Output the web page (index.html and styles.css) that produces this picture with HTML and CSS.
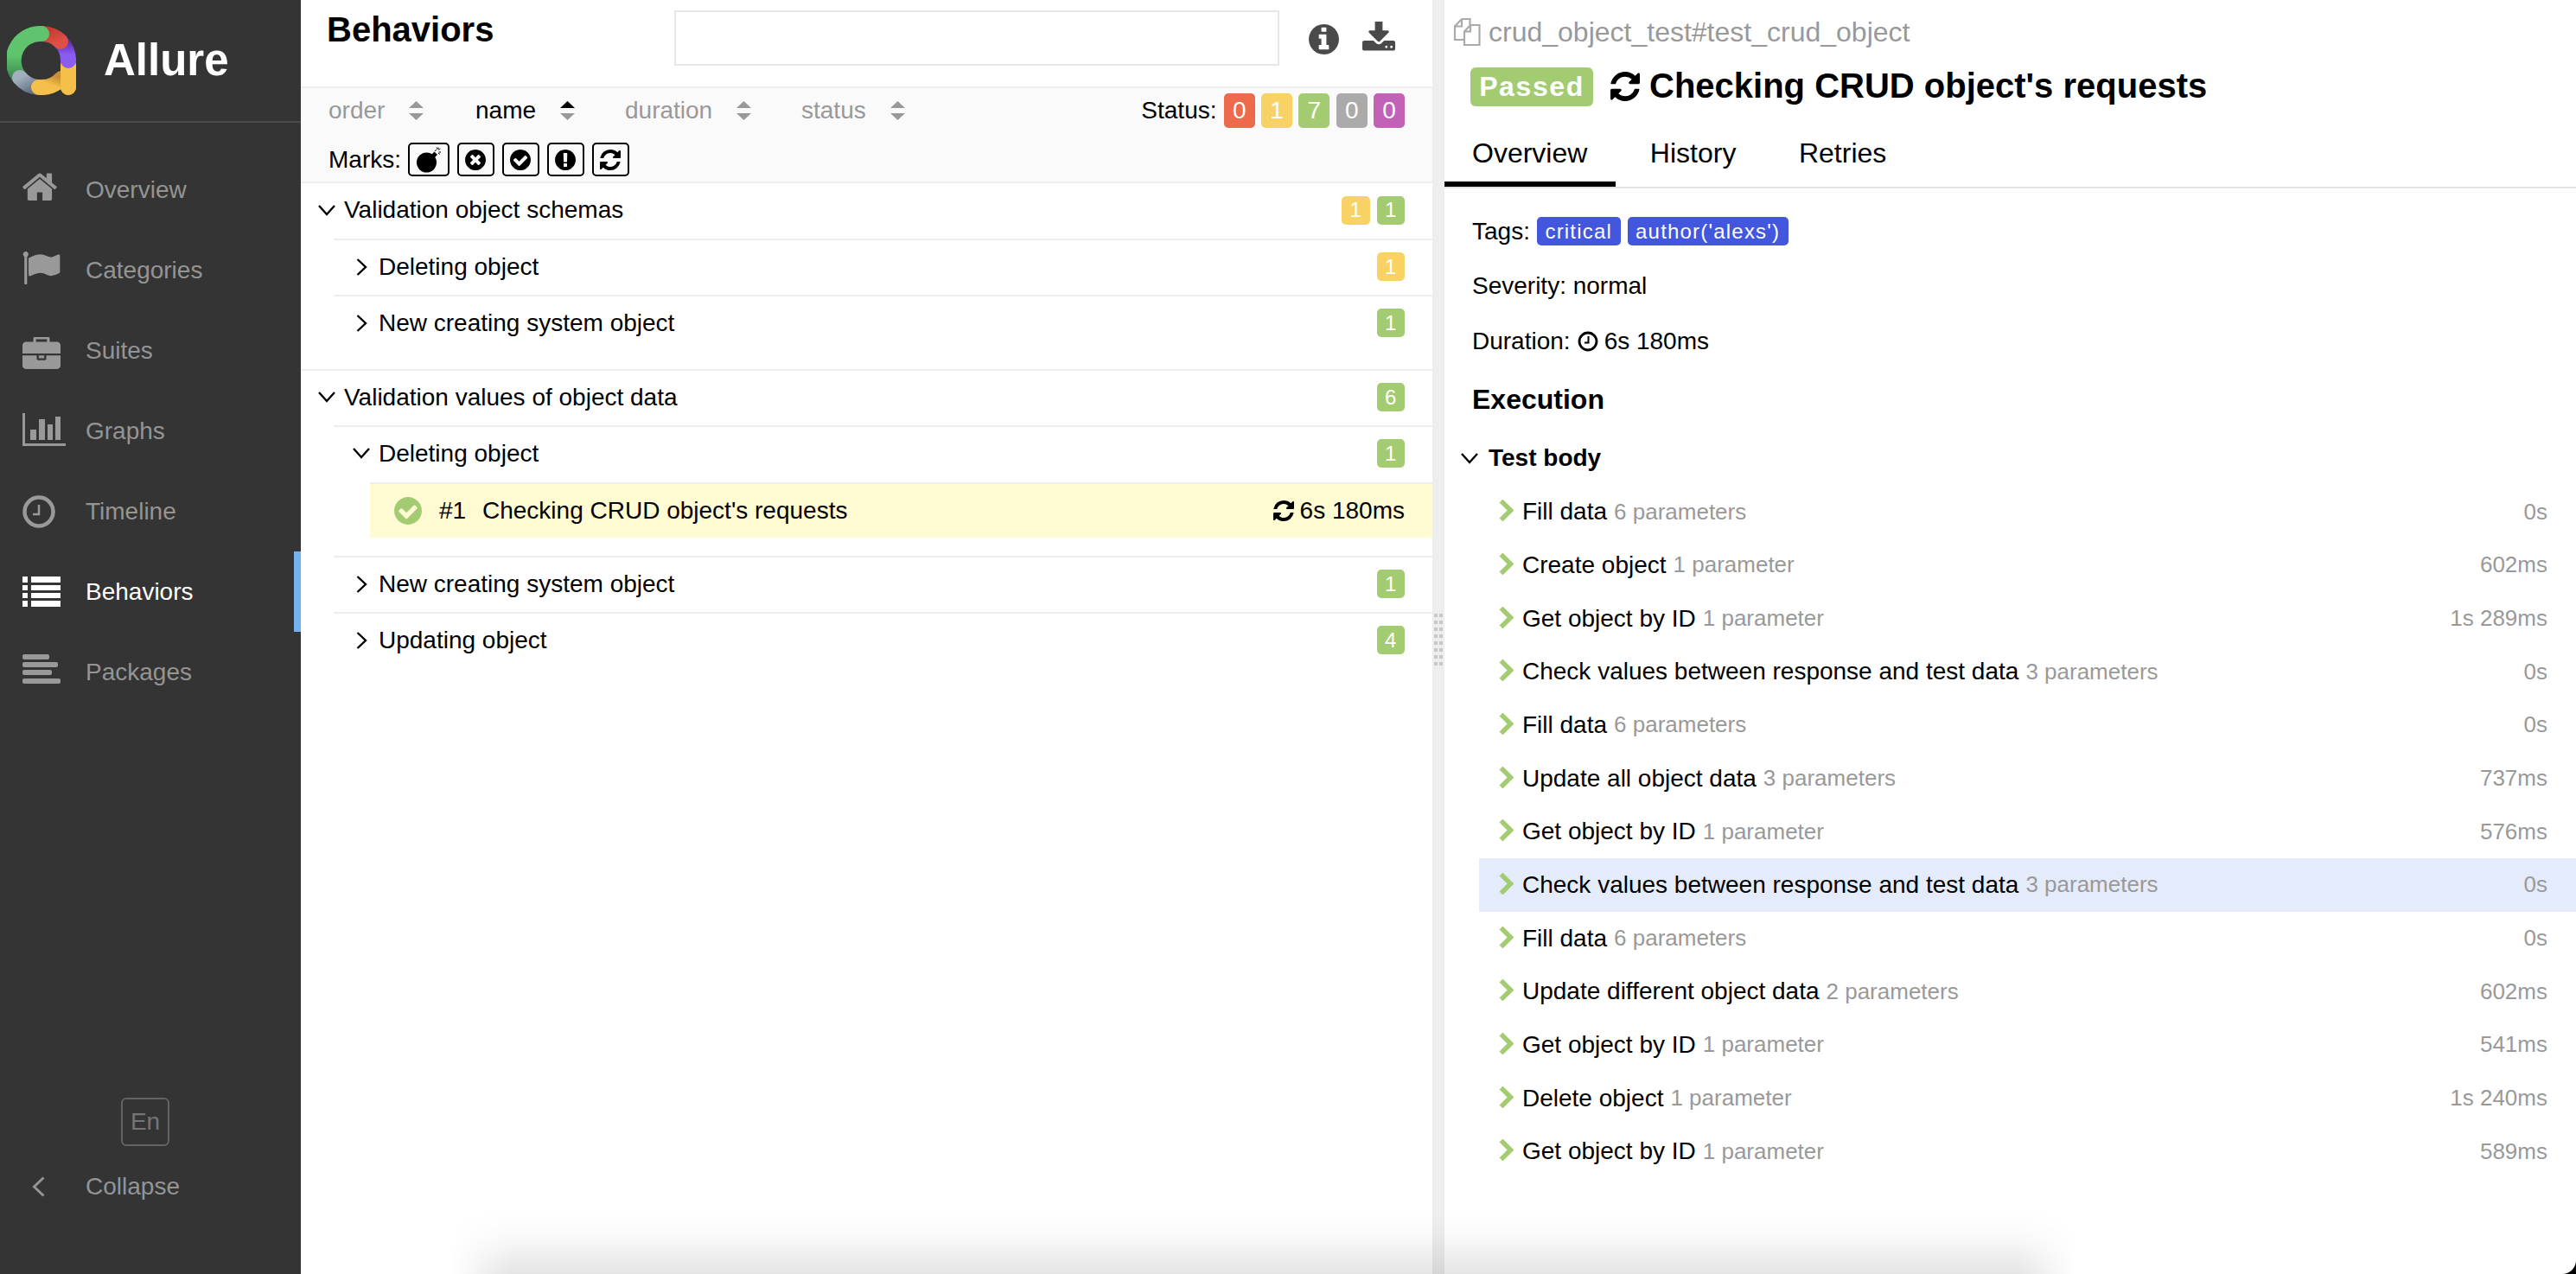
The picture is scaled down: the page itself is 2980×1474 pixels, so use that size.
FILE: index.html
```html
<!DOCTYPE html>
<html lang="en">
<head>
  <meta charset="UTF-8">
  <title>Allure Report</title>
  <link rel="stylesheet" href="styles.css">
</head>
<body>
  <svg class="sprite" xmlns="http://www.w3.org/2000/svg">
    <symbol id="i-home" viewBox="97 190 1600 1346"><path d="M1472 992v480q0 26-19 45t-45 19h-384v-384h-256v384h-384q-26 0-45-19t-19-45v-480q0-1 .5-3t.5-3l575-474 575 474q1 2 1 6zm223-69l-62 74q-8 9-21 11h-3q-13 0-21-7l-692-577-692 577q-12 8-24 7-13-2-21-11l-62-74q-8-10-7-23.5t11-21.5l719-599q32-26 76-26t76 26l244 204v-195q0-14 9-23t23-9h192q14 0 23 9t9 23v408l219 182q10 8 11 21.5t-7 23.5z"/></symbol>
    <symbol id="i-flag" viewBox="64 128 1728 1536"><path d="M320 256q0 72-64 110v1266q0 13-9.5 22.5t-22.5 9.5h-64q-13 0-22.5-9.5t-9.5-22.5v-1266q-64-38-64-110 0-53 37.5-90.5t90.5-37.5 90.5 37.5 37.5 90.5zm1472 64v763q0 25-12.5 38.5t-39.5 27.5q-215 116-369 116-61 0-123.5-22t-108.5-48-115.5-48-142.5-22q-192 0-464 146-17 9-33 9-26 0-45-19t-19-45v-742q0-32 31-55 21-14 79-43 236-120 421-120 107 0 200 29t219 88q38 19 88 19 54 0 117.5-21t110-47 88-47 54.5-21q26 0 45 19t19 45z"/></symbol>
    <symbol id="i-briefcase" viewBox="0 32 1792 1504"><path d="M640 256h512v-128h-512v128zm1152 640v480q0 66-47 113t-113 47h-1472q-66 0-113-47t-47-113v-480h672v160q0 26 19 45t45 19h320q26 0 45-19t19-45v-160h672zm-768 0v128h-256v-128h256zm768-480v384h-1792v-384q0-66 47-113t113-47h352v-160q0-40 28-68t68-28h576q40 0 68 28t28 68v160h352q66 0 113 47t47 113z"/></symbol>
    <symbol id="i-check" viewBox="128 128 1536 1536"><path d="M1412 734q0-28-18-46l-91-90q-19-19-45-19t-45 19l-408 407-226-226q-19-19-45-19t-45 19l-91 90q-18 18-18 46 0 27 18 45l362 362q19 19 45 19 27 0 46-19l543-543q18-18 18-45zm252 162q0 209-103 385.5t-279.5 279.5-385.5 103-385.5-103-279.5-279.5-103-385.5 103-385.5 279.5-279.5 385.5-103 385.5 103 279.5 279.5 103 385.5z"/></symbol>
    <symbol id="i-times" viewBox="128 128 1536 1536"><path d="M1277 1122q0-26-19-45l-181-181 181-181q19-19 19-45 0-27-19-46l-90-90q-19-19-46-19-26 0-45 19l-181 181-181-181q-19-19-45-19-27 0-46 19l-90 90q-19 19-19 46 0 26 19 45l181 181-181 181q-19 19-19 45 0 27 19 46l90 90q19 19 46 19 26 0 45-19l181-181 181 181q19 19 45 19 27 0 46-19l90-90q19-19 19-46zm387-226q0 209-103 385.5t-279.5 279.5-385.5 103-385.5-103-279.5-279.5-103-385.5 103-385.5 279.5-279.5 385.5-103 385.5 103 279.5 279.5 103 385.5z"/></symbol>
    <symbol id="i-excl" viewBox="128 128 1536 1536"><path d="M896 128q209 0 385.5 103t279.5 279.5 103 385.5-103 385.5-279.5 279.5-385.5 103-385.5-103-279.5-279.5-103-385.5 103-385.5 279.5-279.5 385.5-103zm128 1247v-190q0-14-9-23.5t-22-9.5h-192q-13 0-23 10t-10 23v190q0 13 10 23t23 10h192q13 0 22-9.5t9-23.5zm-2-344l18-621q0-12-10-18-10-8-24-8h-220q-14 0-24 8-10 6-10 18l17 621q0 10 10 17.5t24 7.5h185q14 0 23.5-7.5t10.5-17.5z"/></symbol>
    <symbol id="i-info" viewBox="128 128 1536 1536"><path d="M1152 1376v-160q0-14-9-23t-23-9h-96v-512q0-14-9-23t-23-9h-320q-14 0-23 9t-9 23v160q0 14 9 23t23 9h96v320h-96q-14 0-23 9t-9 23v160q0 14 9 23t23 9h448q14 0 23-9t9-23zm-128-896v-160q0-14-9-23t-23-9h-192q-14 0-23 9t-9 23v160q0 14 9 23t23 9h192q14 0 23-9t9-23zm640 416q0 209-103 385.5t-279.5 279.5-385.5 103-385.5-103-279.5-279.5-103-385.5 103-385.5 279.5-279.5 385.5-103 385.5 103 279.5 279.5 103 385.5z"/></symbol>
    <symbol id="i-download" viewBox="64 128 1664 1408"><path d="M1344 1344q0-26-19-45t-45-19-45 19-19 45 19 45 45 19 45-19 19-45zm256 0q0-26-19-45t-45-19-45 19-19 45 19 45 45 19 45-19 19-45zm128-224v320q0 40-28 68t-68 28h-1472q-40 0-68-28t-28-68v-320q0-40 28-68t68-28h465l135 136q58 56 136 56t136-56l136-136h464q40 0 68 28t28 68zm-325-569q17 41-14 70l-448 448q-18 19-45 19t-45-19l-448-448q-31-29-14-70 17-39 59-39h256v-448q0-26 19-45t45-19h256q26 0 45 19t19 45v448h256q42 0 59 39z"/></symbol>
    <symbol id="i-sync" viewBox="0 0 1536 1536"><path d="M1511 928q0 5-1 7-64 268-268 434.5t-478 166.5q-146 0-282.5-55t-243.5-157l-129 129q-19 19-45 19t-45-19-19-45v-448q0-26 19-45t45-19h448q26 0 45 19t19 45-19 45l-137 137q71 66 161 102t187 36q134 0 250-65t186-179q11-17 53-117 8-23 30-23h192q13 0 22.5 9.5t9.5 22.5zm25-800v448q0 26-19 45t-45 19h-448q-26 0-45-19t-19-45 19-45l138-138q-148-137-349-137-134 0-250 65t-186 179q-11 17-53 117-8 23-30 23h-199q-13 0-22.5-9.5t-9.5-22.5v-7q65-268 270-434.5t480-166.5q146 0 284 55.5t245 156.5l130-129q19-19 45-19t45 19 19 45z"/></symbol>
    <symbol id="i-bomb" viewBox="0 0 32 32">
      <circle cx="13.5" cy="19" r="11.5"/>
      <path d="M19 10l3.5-3.5 3.5 3.5-3.5 3.5z"/>
      <path d="M23 6l2-2M27 1.5v2.5M25 1.5l1 2M29.5 3l-2 1.5M30 7h-2.500M29 9.5l-2-1.5" fill="none" stroke="currentColor" stroke-width="1"/>
    </symbol>
    <symbol id="i-clock" viewBox="0 0 24 24">
      <circle cx="12" cy="12" r="10" fill="none" stroke="currentColor" stroke-width="2.8"/>
      <path d="M12.5 6v7.5H8" fill="none" stroke="currentColor" stroke-width="2"/>
    </symbol>
    <symbol id="i-sort" viewBox="0 0 17 22">
      <path class="sort-up" d="M8.5 0L17 8H0z"/>
      <path class="sort-down" d="M0 14h17L8.5 22z"/>
    </symbol>
    <symbol id="i-down" viewBox="0 0 20 13"><path d="M1 1l9 10 9-10" fill="none" stroke="currentColor" stroke-width="2.4"/></symbol>
    <symbol id="i-right" viewBox="0 0 13 20"><path d="M1.5 1l9.500 9-9.500 9" fill="none" stroke="currentColor" stroke-width="2.4"/></symbol>
    <symbol id="i-step" viewBox="0 0 17 25"><path d="M2.5 1.5l11 11-11 11" fill="none" stroke="currentColor" stroke-width="5.5"/></symbol>
  </svg>

  <aside class="side-nav">
    <div class="side-nav__head">
      <svg class="logo" viewBox="0 0 80 80" xmlns="http://www.w3.org/2000/svg">
        <defs>
          <linearGradient id="g-green" x1="0" y1="0" x2="0" y2="1"><stop offset="0.5" stop-color="#5fc46d"/><stop offset="1" stop-color="#3c8a4c"/></linearGradient>
          <linearGradient id="g-red" x1="0" y1="0" x2="1" y2="1"><stop offset="0" stop-color="#c43d33"/><stop offset="1" stop-color="#de5046"/></linearGradient>
          <linearGradient id="g-purple" x1="0" y1="0" x2="0" y2="1"><stop offset="0" stop-color="#5f2db8"/><stop offset="0.7" stop-color="#8a5cf0"/></linearGradient>
          <linearGradient id="g-grey" x1="0" y1="0" x2="1" y2="1"><stop offset="0" stop-color="#a2afbd"/><stop offset="1" stop-color="#667385"/></linearGradient>
          <linearGradient id="g-yellow" x1="0" y1="1" x2="1" y2="0"><stop offset="0.4" stop-color="#f5c04a"/><stop offset="1" stop-color="#c98f35"/></linearGradient>
        </defs>
        <g fill="none" stroke-width="18" stroke-linecap="round">
          <path d="M71 45v26" stroke="#f5c04a"/>
          <path d="M62 18A31 31 0 0 1 71 40" stroke="url(#g-purple)"/>
          <path d="M40 9A31 31 0 0 1 62 18" stroke="url(#g-red)"/>
          <path d="M15 60A31 31 0 0 1 40 9" stroke="url(#g-green)"/>
          <path d="M36 71A31 31 0 0 1 15 60" stroke="url(#g-grey)"/>
          <path d="M37 70.9A31 31 0 0 0 63 61" stroke="url(#g-yellow)"/>
        </g>
        <path d="M62 45h18v26a9 9 0 0 1-18 0z" fill="#f5c04a"/>
        <path d="M62 40a9 9 0 0 0 18 0v-4H62z" fill="#8a5cf0"/>
      </svg>
      <span class="brand">Allure</span>
    </div>

    <nav class="side-nav__menu">
      <a class="nav-item"><span class="nav-icon"><svg class="ico-home"><use href="#i-home"/></svg></span>Overview</a>
      <a class="nav-item"><span class="nav-icon"><svg class="ico-flag"><use href="#i-flag"/></svg></span>Categories</a>
      <a class="nav-item"><span class="nav-icon"><svg class="ico-case"><use href="#i-briefcase"/></svg></span>Suites</a>
      <a class="nav-item"><span class="nav-icon">
        <svg class="ico-chart" viewBox="0 0 50 38">
          <path d="M0 0h3v35h47v3H0z"/>
          <path d="M9 19h7v12H9zM19 7h7v24h-7zM29 13h6v18h-6zM38 4h6v27h-6z"/>
        </svg></span>Graphs</a>
      <a class="nav-item"><span class="nav-icon">
        <svg class="ico-clock" viewBox="0 0 38 38">
          <circle cx="19" cy="19" r="16.5" fill="none" stroke="currentColor" stroke-width="4.5"/>
          <path d="M19 11v11h-7" fill="none" stroke="currentColor" stroke-width="2.5"/>
        </svg></span>Timeline</a>
      <a class="nav-item nav-item--active"><span class="nav-icon">
        <svg class="ico-list" viewBox="0 0 44 35">
          <path d="M0 0h6v7H0zM10 0h34v7H10zM0 10h6v6H0zM10 10h34v6H10zM0 19h6v6H0zM10 19h34v6H10zM0 28h6v7H0zM10 28h34v7H10z"/>
        </svg></span>Behaviors</a>
      <a class="nav-item"><span class="nav-icon">
        <svg class="ico-pack" viewBox="0 0 44 35">
          <rect width="31" height="6" rx="2"/><rect y="9" width="41" height="6" rx="2"/><rect y="18" width="34" height="6" rx="2"/><rect y="28" width="44" height="6" rx="2"/>
        </svg></span>Packages</a>
    </nav>

    <div class="side-nav__foot">
      <div class="lang">En</div>
      <a class="collapse">
        <svg class="collapse__arrow" viewBox="0 0 15 24"><path d="M13.5 1.5L2.5 12l11 10.5" fill="none" stroke="currentColor" stroke-width="3"/></svg>
        Collapse
      </a>
    </div>
  </aside>

  <section class="pane pane--tree">
    <header class="tree-head">
      <h2 class="tree-head__title">Behaviors</h2>
      <input class="search" type="text">
      <svg class="tool tool--info"><use href="#i-info"/></svg>
      <svg class="tool tool--download"><use href="#i-download"/></svg>
    </header>

    <div class="filters">
      <div class="filters__row">
        <span class="sorter sorter--order">order <svg class="sort-ico"><use href="#i-sort"/></svg></span>
        <span class="sorter sorter--name sorter--active">name <svg class="sort-ico"><use href="#i-sort"/></svg></span>
        <span class="sorter sorter--duration">duration <svg class="sort-ico"><use href="#i-sort"/></svg></span>
        <span class="sorter sorter--status">status <svg class="sort-ico"><use href="#i-sort"/></svg></span>
        <span class="status-filter">
          <span class="status-filter__label">Status:</span>
          <span class="count count--big failed">0</span>
          <span class="count count--big broken">1</span>
          <span class="count count--big passed">7</span>
          <span class="count count--big skipped">0</span>
          <span class="count count--big unknown">0</span>
        </span>
      </div>
      <div class="marks">
        <span class="marks__label">Marks:</span>
        <span class="mark mark--wide"><svg><use href="#i-bomb"/></svg></span>
        <span class="mark"><svg><use href="#i-times"/></svg></span>
        <span class="mark"><svg><use href="#i-check"/></svg></span>
        <span class="mark"><svg><use href="#i-excl"/></svg></span>
        <span class="mark"><svg><use href="#i-sync"/></svg></span>
      </div>
    </div>

    <div class="tree">
      <div class="group">
        <div class="group__head">
          <svg class="arrow-down"><use href="#i-down"/></svg>
          <span class="node-name">Validation object schemas</span>
          <span class="counts"><span class="count broken">1</span><span class="count passed">1</span></span>
        </div>
        <div class="node">
          <svg class="arrow-right"><use href="#i-right"/></svg>
          <span class="node-name">Deleting object</span>
          <span class="counts"><span class="count broken">1</span></span>
        </div>
        <div class="node">
          <svg class="arrow-right"><use href="#i-right"/></svg>
          <span class="node-name">New creating system object</span>
          <span class="counts"><span class="count passed">1</span></span>
        </div>
      </div>

      <div class="group">
        <div class="group__head">
          <svg class="arrow-down"><use href="#i-down"/></svg>
          <span class="node-name">Validation values of object data</span>
          <span class="counts"><span class="count passed">6</span></span>
        </div>
        <div class="node">
          <svg class="arrow-down arrow-down--node"><use href="#i-down"/></svg>
          <span class="node-name">Deleting object</span>
          <span class="counts"><span class="count passed">1</span></span>
        </div>
        <div class="leaf-wrap">
          <div class="leaf">
            <svg class="leaf__status"><use href="#i-check"/></svg>
            <span class="leaf__order">#1</span>
            <span class="node-name">Checking CRUD object's requests</span>
            <span class="leaf__time"><svg class="leaf__sync"><use href="#i-sync"/></svg>6s 180ms</span>
          </div>
        </div>
        <div class="node">
          <svg class="arrow-right"><use href="#i-right"/></svg>
          <span class="node-name">New creating system object</span>
          <span class="counts"><span class="count passed">1</span></span>
        </div>
        <div class="node">
          <svg class="arrow-right"><use href="#i-right"/></svg>
          <span class="node-name">Updating object</span>
          <span class="counts"><span class="count passed">4</span></span>
        </div>
      </div>
    </div>
  </section>

  <div class="splitter"><div class="splitter__grip"></div></div>

  <section class="pane pane--detail">
    <div class="full-name">
      <svg class="full-name__copy" viewBox="0 0 32 32">
        <path d="M10 1L2 9.5V25h10M10 1h9.5v7M10 1v8.5H2" fill="none" stroke="currentColor" stroke-width="2.2"/>
        <path d="M20 8h10.5v23H13V15.5zM20 8v7.5h-7" fill="none" stroke="currentColor" stroke-width="2.2"/>
      </svg>
      crud_object_test#test_crud_object
    </div>
    <h1 class="test-title">
      <span class="status-pill">Passed</span>
      <svg class="test-title__sync"><use href="#i-sync"/></svg>
      Checking CRUD object's requests
    </h1>
    <div class="tabs">
      <a class="tab tab--active">Overview</a>
      <a class="tab">History</a>
      <a class="tab">Retries</a>
    </div>

    <div class="meta">
      <div class="meta__row">Tags:<span class="tag tag--first">critical</span><span class="tag">author('alexs')</span></div>
      <div class="meta__row">Severity: normal</div>
      <div class="meta__row">Duration:<svg class="meta__clock"><use href="#i-clock"/></svg>6s 180ms</div>
    </div>

    <h3 class="section-title">Execution</h3>
    <div class="stage"><svg class="arrow-down"><use href="#i-down"/></svg>Test body</div>

    <div class="steps">
      <div class="step"><svg class="step__arrow"><use href="#i-step"/></svg><span class="step__name">Fill data</span><span class="step__params">6 parameters</span><span class="step__time">0s</span></div>
      <div class="step"><svg class="step__arrow"><use href="#i-step"/></svg><span class="step__name">Create object</span><span class="step__params">1 parameter</span><span class="step__time">602ms</span></div>
      <div class="step"><svg class="step__arrow"><use href="#i-step"/></svg><span class="step__name">Get object by ID</span><span class="step__params">1 parameter</span><span class="step__time">1s 289ms</span></div>
      <div class="step"><svg class="step__arrow"><use href="#i-step"/></svg><span class="step__name">Check values between response and test data</span><span class="step__params">3 parameters</span><span class="step__time">0s</span></div>
      <div class="step"><svg class="step__arrow"><use href="#i-step"/></svg><span class="step__name">Fill data</span><span class="step__params">6 parameters</span><span class="step__time">0s</span></div>
      <div class="step"><svg class="step__arrow"><use href="#i-step"/></svg><span class="step__name">Update all object data</span><span class="step__params">3 parameters</span><span class="step__time">737ms</span></div>
      <div class="step"><svg class="step__arrow"><use href="#i-step"/></svg><span class="step__name">Get object by ID</span><span class="step__params">1 parameter</span><span class="step__time">576ms</span></div>
      <div class="step step--hover"><svg class="step__arrow"><use href="#i-step"/></svg><span class="step__name">Check values between response and test data</span><span class="step__params">3 parameters</span><span class="step__time">0s</span></div>
      <div class="step"><svg class="step__arrow"><use href="#i-step"/></svg><span class="step__name">Fill data</span><span class="step__params">6 parameters</span><span class="step__time">0s</span></div>
      <div class="step"><svg class="step__arrow"><use href="#i-step"/></svg><span class="step__name">Update different object data</span><span class="step__params">2 parameters</span><span class="step__time">602ms</span></div>
      <div class="step"><svg class="step__arrow"><use href="#i-step"/></svg><span class="step__name">Get object by ID</span><span class="step__params">1 parameter</span><span class="step__time">541ms</span></div>
      <div class="step"><svg class="step__arrow"><use href="#i-step"/></svg><span class="step__name">Delete object</span><span class="step__params">1 parameter</span><span class="step__time">1s 240ms</span></div>
      <div class="step"><svg class="step__arrow"><use href="#i-step"/></svg><span class="step__name">Get object by ID</span><span class="step__params">1 parameter</span><span class="step__time">589ms</span></div>
    </div>
  </section>

  <div class="window-shadow"></div>
  <div class="window-corner"></div>
</body>
</html>
```

FILE: styles.css
```css
* {
  box-sizing: border-box;
}

html, body {
  height: 100%;
}

body {
  margin: 0;
  display: flex;
  position: relative;
  overflow: hidden;
  font-family: "Liberation Sans", Arial, sans-serif;
  font-size: 28px;
  color: #000;
  background: #fff;
}

.sprite {
  position: absolute;
  width: 0;
  height: 0;
}

svg {
  fill: currentColor;
  flex: none;
}

/* sidebar */
.side-nav {
  width: 348px;
  flex: none;
  display: flex;
  flex-direction: column;
  background: #343434;
  color: #949494;
}

.side-nav__head {
  height: 142px;
  flex: none;
  display: flex;
  align-items: flex-start;
  border-bottom: 2px solid #4b4b4b;
  padding: 30px 0 0 8px;
}

.logo {
  width: 80px;
  height: 80px;
}

.brand {
  margin: 8px 0 0 32px;
  font-size: 51px;
  line-height: 64px;
  font-weight: bold;
  color: #fff;
}

.side-nav__menu {
  margin-top: 31px;
}

.nav-item {
  height: 93px;
  display: flex;
  align-items: center;
  padding-left: 26px;
  padding-top: 1px;
}

.nav-item--active {
  color: #fff;
  border-right: 8px solid #74b1ef;
}

.nav-icon {
  width: 73px;
  display: flex;
  color: #999;
}

.nav-item--active .nav-icon {
  color: #fff;
}

.ico-home { width: 40px; height: 33px; margin-top: -9px; }
.ico-flag { width: 44px; height: 38px; margin-top: -7px; }
.ico-case { width: 44px; height: 37px; margin-top: 4px; }
.ico-chart { width: 50px; height: 38px; margin-top: -4px; }
.ico-clock { width: 38px; height: 38px; }
.ico-list { width: 44px; height: 35px; margin-top: -2px; }
.ico-pack { width: 44px; height: 35px; margin-top: -8px; }

.side-nav__foot {
  margin-top: auto;
  padding-bottom: 81px;
}

.lang {
  width: 56px;
  height: 56px;
  margin-left: 140px;
  border: 2px solid #636363;
  border-radius: 6px;
  color: #757575;
  display: flex;
  align-items: center;
  justify-content: center;
}

.collapse {
  display: flex;
  align-items: center;
  margin-top: 27px;
  padding-left: 37px;
  height: 40px;
}

.collapse__arrow {
  width: 15px;
  height: 24px;
  margin-right: 47px;
}

/* panes */
.pane {
  width: 1309px;
  flex: none;
}

.splitter {
  width: 14px;
  flex: none;
  background: #eceef0;
  padding: 710px 2px 0;
}

.splitter__grip {
  height: 60px;
  background-image:
    linear-gradient(#0000 4px, #eceef0 4px),
    linear-gradient(90deg, #c9c9c9 4px, transparent 4px, transparent 6px, #c9c9c9 6px);
  background-size: 10px 8px, 10px 8px;
}

/* left pane */
.tree-head {
  height: 100px;
  display: flex;
  align-items: flex-start;
  padding-left: 30px;
}

.tree-head__title {
  width: 402px;
  margin: 11px 0 0;
  font-size: 40px;
  line-height: 46px;
}

.search {
  width: 700px;
  height: 64px;
  margin-top: 12px;
  border: 2px solid #e6e6e6;
  background: #fff;
  outline: none;
}

.tool {
  color: #4a4a4a;
}

.tool--info {
  width: 35px;
  height: 35px;
  margin: 28px 0 0 34px;
}

.tool--download {
  width: 38px;
  height: 35px;
  margin: 25px 0 0 27px;
}

.filters {
  height: 112px;
  background: #fafafa;
  border-top: 2px solid #eeeeee;
  border-bottom: 2px solid #eeeeee;
  padding: 6px 32px 0 32px;
}

.filters__row {
  display: flex;
  align-items: center;
  height: 40px;
}

.sorter {
  display: flex;
  align-items: center;
  color: #999;
  width: 170px;
}

.sorter--order { width: 170px; }
.sorter--name { width: 173px; }
.sorter--duration { width: 204px; }
.sorter--status { width: auto; }

.sort-ico {
  width: 17px;
  height: 22px;
  margin-left: 28px;
  color: #999;
}

.sort-up {
  fill: currentColor;
}

.sorter--active {
  color: #000;
}

.sorter--active .sort-ico {
  fill: #999;
  color: #000;
}

.status-filter {
  margin-left: auto;
  display: flex;
  align-items: center;
  gap: 7.3px;
}

.status-filter__label {
  margin-right: 1px;
}

.count {
  width: 32.5px;
  height: 33px;
  border-radius: 5px;
  color: #fff;
  font-size: 24px;
  display: flex;
  align-items: center;
  justify-content: center;
}

.count--big {
  width: 36px;
  height: 40px;
  font-size: 28px;
}

.failed { background: #ed6a4c; }
.broken { background: #f9d266; }
.passed { background: #a3cc72; }
.skipped { background: #aaaaaa; }
.unknown { background: #c261b8; }

.marks {
  display: flex;
  align-items: center;
  margin-top: 17px;
}

.marks__label {
  width: 92px;
}

.mark {
  width: 43.5px;
  height: 39px;
  border: 2px solid #000;
  border-radius: 5px;
  margin-right: 8.5px;
  display: flex;
  align-items: center;
  justify-content: center;
}

.mark--wide {
  width: 48px;
}

.mark svg {
  width: 24px;
  height: 24px;
}

.mark--wide svg {
  width: 32px;
  height: 32px;
}

/* tree */
.group {
  padding-bottom: 21px;
}

.group + .group {
  border-top: 2px solid #eeeeee;
  padding-bottom: 0;
}

.group__head {
  height: 64px;
  display: flex;
  align-items: center;
  padding: 0 32px 2px 20px;
}

.group + .group .group__head {
  height: 63px;
}

.arrow-down {
  width: 20px;
  height: 13px;
  margin-right: 10px;
}

.node {
  height: 65px;
  margin-left: 38px;
  border-top: 2px solid #eeeeee;
  display: flex;
  align-items: center;
  padding: 0 32px 2px 26px;
}

.arrow-right {
  width: 13px;
  height: 20px;
  margin-right: 13px;
}

.arrow-down--node {
  margin-left: -4px;
  margin-right: 10px;
}

.counts {
  margin-left: auto;
  display: flex;
  gap: 8px;
}

.leaf-wrap {
  padding: 1px 0 21px 80px;
}

.leaf {
  height: 64px;
  background: #fffbd2;
  border-top: 2px solid #eeeeee;
  display: flex;
  align-items: center;
  padding: 0 32px 0 28px;
}

.leaf__status {
  width: 32px;
  height: 32px;
  color: #a3cc72;
}

.leaf__order {
  margin-left: 20px;
  width: 50px;
}

.leaf__time {
  margin-left: auto;
  display: flex;
  align-items: center;
}

.leaf__sync {
  width: 24px;
  height: 24px;
  margin-right: 7px;
}

/* right pane */
.full-name {
  height: 74px;
  display: flex;
  align-items: center;
  padding-left: 10px;
  font-size: 32px;
  color: #999;
}

.full-name__copy {
  width: 32px;
  height: 32px;
  margin-right: 9px;
  color: #aaa;
}

.test-title {
  margin: 4px 0 0;
  height: 45px;
  display: flex;
  align-items: center;
  padding: 0 0 2px 30px;
  font-size: 40px;
}

.status-pill {
  align-self: flex-start;
  width: 142px;
  height: 45px;
  background: #a3cc72;
  border-radius: 6px;
  color: #fff;
  font-size: 32px;
  letter-spacing: 1.6px;
  display: flex;
  align-items: center;
  justify-content: center;
}

.test-title__sync {
  width: 34px;
  height: 34px;
  margin: 0 11px 0 20px;
}

.tabs {
  height: 95px;
  display: flex;
  align-items: flex-end;
  gap: 8px;
  border-bottom: 2px solid #e4e4e4;
}

.tab {
  height: 70px;
  padding: 13px 32.5px 0 32px;
  font-size: 32px;
  line-height: 37px;
}

.tab--active {
  border-bottom: 6px solid #000;
}

.meta {
  padding: 18px 0 0 32px;
}

.meta__row {
  height: 63.5px;
  display: flex;
  align-items: center;
}

.tag {
  height: 33px;
  padding: 0 9.5px;
  margin-left: 8px;
  background: #4257de;
  border-radius: 5px;
  color: #fff;
  font-size: 24px;
  letter-spacing: 1.2px;
  display: flex;
  align-items: center;
}

.meta__clock {
  width: 24px;
  height: 24px;
  margin: 0 7px 0 8px;
}

.section-title {
  margin: 0;
  height: 70px;
  padding-left: 32px;
  font-size: 32px;
  line-height: 70px;
}

.stage {
  height: 65px;
  display: flex;
  align-items: center;
  padding: 2px 0 0 19px;
  font-weight: bold;
}

.stage .arrow-down {
  margin-right: 12px;
}

.steps {
  display: flex;
  flex-direction: column;
  margin-left: 40px;
}

.step {
  height: 61.67px;
  display: flex;
  align-items: center;
  padding: 0 33px 0 23px;
}

.step--hover {
  background: #e4ebfb;
}

.step__arrow {
  width: 17px;
  height: 25px;
  margin: -3px 10px 0 0;
  color: #a3cc72;
}

.step__params {
  margin-left: 8px;
  font-size: 26px;
  color: #999;
}

.step__time {
  margin-left: auto;
  font-size: 26px;
  color: #999;
}

/* window edge left over from the capture */
.window-shadow {
  position: absolute;
  left: 522px;
  width: 1880px;
  bottom: 0;
  height: 70px;
  background: linear-gradient(to bottom, rgba(0, 0, 0, 0), rgba(0, 0, 0, 0.025) 40%, rgba(0, 0, 0, 0.1));
  -webkit-mask-image: linear-gradient(to right, transparent, #000 68px, #000 calc(100% - 68px), transparent);
  mask-image: linear-gradient(to right, transparent, #000 68px, #000 calc(100% - 68px), transparent);
  pointer-events: none;
}

.window-corner {
  position: absolute;
  right: 0;
  bottom: 0;
  width: 16px;
  height: 16px;
  background: radial-gradient(circle at 0 0, transparent 15.5px, #000 16.5px);
  pointer-events: none;
}
```
